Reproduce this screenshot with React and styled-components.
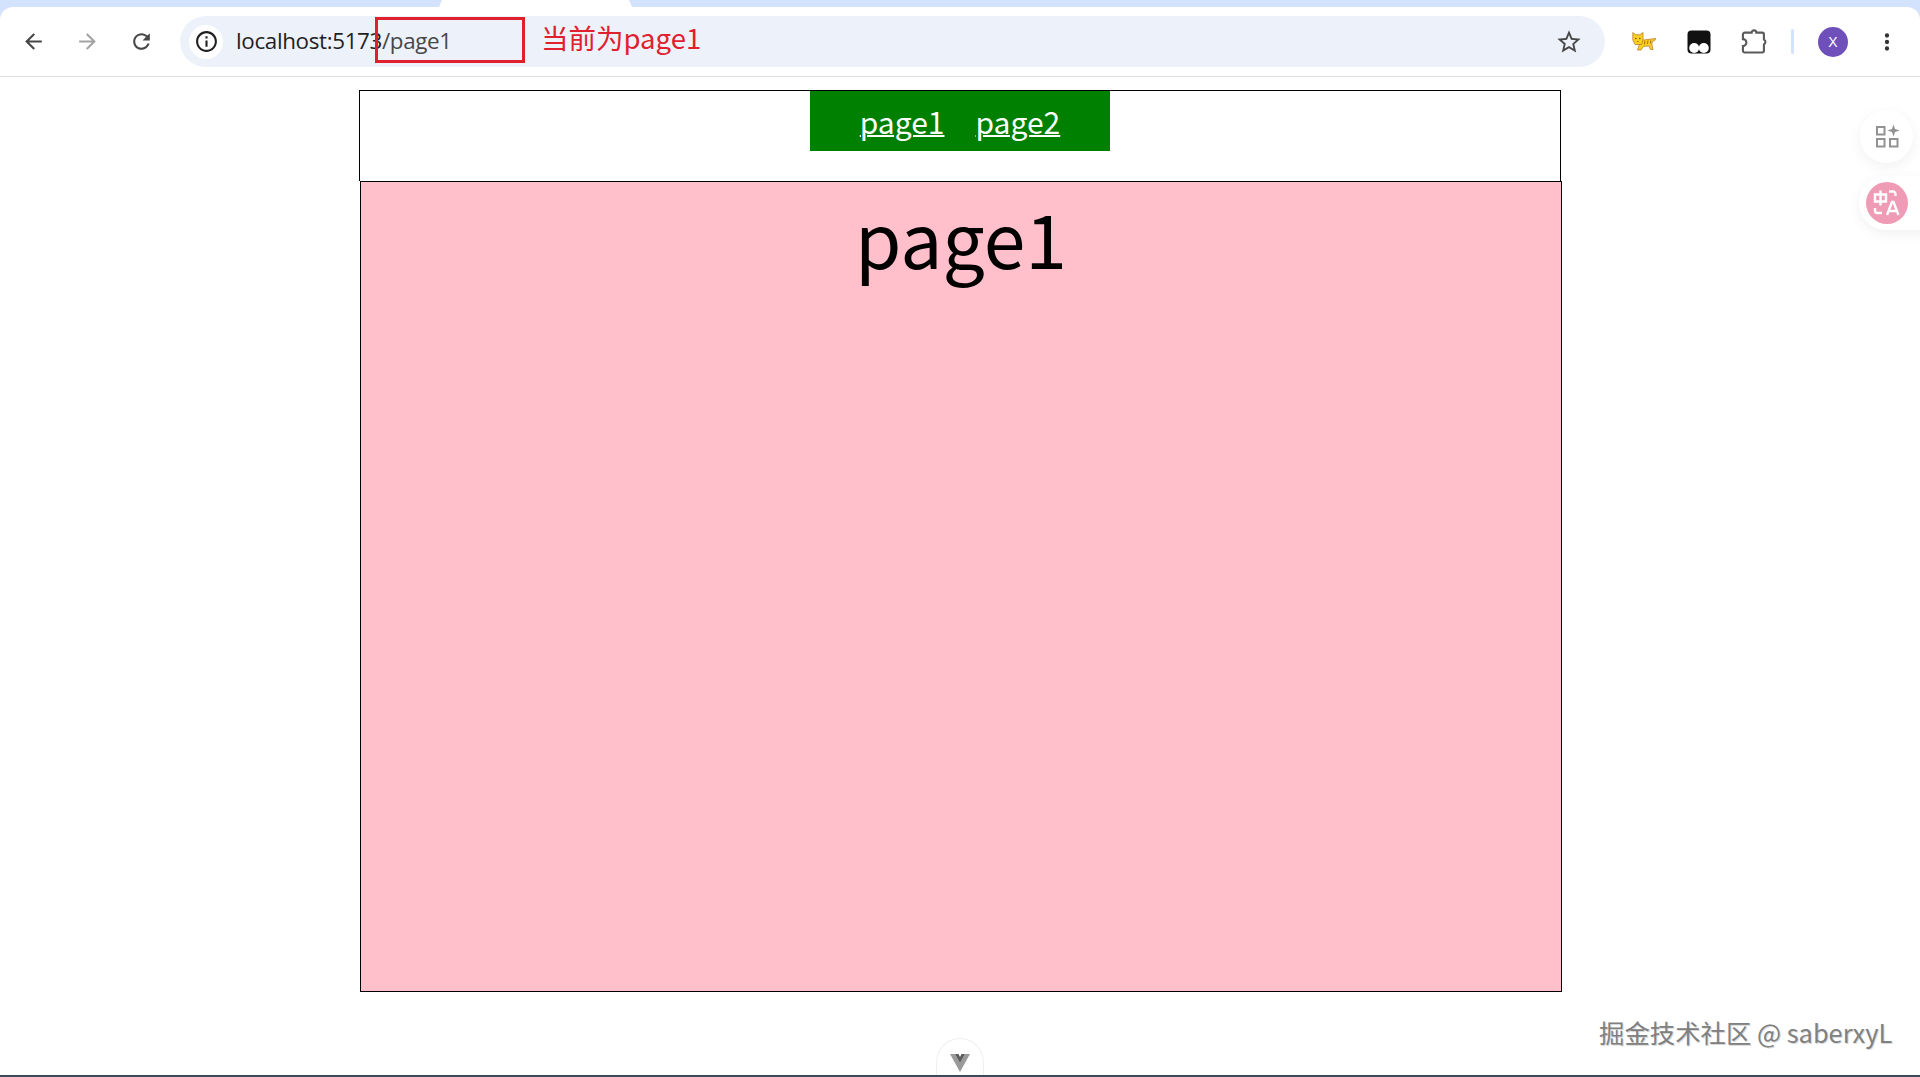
import React from "react";
import styled, { createGlobalStyle } from "styled-components";

const GlobalStyle = createGlobalStyle`
  html, body {
    margin: 0;
    padding: 0;
    background: #fff;
    overflow: hidden;
  }
`;

const cjk = `"Noto Sans CJK SC", "Noto Sans", sans-serif`;

const Page = styled.div`
  position: relative;
  display: flex;
  flex-direction: column;
  width: 1920px;
  height: 1077px;
  overflow: hidden;
  background: #fff;
`;

const Chrome = styled.div`
  background: #d3e3fd;
`;

const TabStrip = styled.div`
  height: 7px;
  padding-left: 439px;
`;

const ActiveTab = styled.div`
  width: 193px;
  height: 7px;
  background: #fff;
  clip-path: polygon(3px 0, calc(100% - 3px) 0, 100% 100%, 0 100%);
`;

const Toolbar = styled.div`
  display: flex;
  align-items: center;
  height: 69px;
  padding-left: 11px;
  background: #fff;
  border-radius: 13px 13px 0 0;
  border-bottom: 1px solid #e1e1e1;
`;

const NavButton = styled.div`
  display: flex;
  align-items: center;
  justify-content: center;
  width: 44px;
  margin-right: 10px;
  color: ${(p) => (p.$disabled ? "#a3a3a3" : "#474747")};
`;

const AddressBar = styled.div`
  position: relative;
  display: flex;
  align-items: center;
  width: 1425px;
  height: 51px;
  margin-left: 7px;
  margin-right: 11px;
  padding-left: 9px;
  box-sizing: border-box;
  background: #edf2fa;
  border-radius: 26px;
`;

const InfoBadge = styled.div`
  display: flex;
  align-items: center;
  justify-content: center;
  width: 34px;
  height: 34px;
  border-radius: 50%;
  background: #fff;
  color: #1f1f1f;
`;

const Url = styled.div`
  margin-left: 13px;
  margin-bottom: 2px;
  font-family: "Open Sans", sans-serif;
  font-size: 22.4px;
  letter-spacing: -0.35px;
  color: #1f1f1f;
`;

const UrlPath = styled.span`
  color: #474747;
`;

const StarButton = styled.div`
  display: flex;
  margin-left: auto;
  margin-right: 22px;
  color: #474747;
`;

const HighlightBox = styled.div`
  position: absolute;
  left: 195px;
  top: 1px;
  width: 150px;
  height: 46px;
  box-sizing: border-box;
  border: 3px solid #e0202f;
`;

const Annotation = styled.div`
  position: absolute;
  left: 361px;
  top: 1px;
  font-family: ${cjk};
  font-size: 27.5px;
  line-height: 40px;
  color: #e0202f;
`;

const ExtButton = styled.div`
  display: flex;
  align-items: center;
  justify-content: center;
  width: 55px;
  color: #5a5a5a;
`;

const Divider = styled.div`
  width: 3px;
  height: 25px;
  margin-left: 10px;
  background: #d3e3fd;
  border-radius: 2px;
`;

const Avatar = styled.div`
  display: flex;
  align-items: center;
  justify-content: center;
  width: 30px;
  height: 30px;
  margin-left: 24px;
  border-radius: 50%;
  background: #6f4fb9;
  color: #fff;
  font-family: "Liberation Sans", sans-serif;
  font-size: 14px;
`;

const MenuButton = styled.div`
  display: flex;
  margin-left: 26px;
  color: #333;
`;

const Main = styled.main`
  flex: 1;
  display: flex;
  flex-direction: column;
  align-items: center;
  padding-top: 13px;
`;

const Header = styled.header`
  display: flex;
  justify-content: center;
  width: 1202px;
  height: 91px;
  box-sizing: border-box;
  border: 1px solid #000;
  border-bottom: none;
`;

const Nav = styled.nav`
  display: flex;
  justify-content: center;
  align-items: center;
  gap: 31px;
  width: 300px;
  height: 60px;
  background: #008000;
`;

const NavLink = styled.a`
  font-family: ${cjk};
  font-size: 30px;
  color: #fff;
  text-decoration: underline;
  text-decoration-thickness: 2px;
`;

const Content = styled.section`
  width: 1202px;
  height: 811px;
  margin-left: 2px;
  box-sizing: border-box;
  border: 1px solid #000;
  background: #ffc0cb;
  text-align: center;
`;

const Title = styled.h1`
  margin: 0;
  padding-top: 5px;
  font-family: ${cjk};
  font-size: 75px;
  font-weight: 400;
  line-height: 100px;
  color: #000;
`;

const BottomBar = styled.div`
  height: 2px;
  background: #3a4a5c;
`;

const SideButton = styled.div`
  position: absolute;
  left: 1860px;
  top: ${(p) => p.$top}px;
  display: flex;
  align-items: center;
  justify-content: center;
  width: 53px;
  height: 53px;
  padding-bottom: 2px;
  box-sizing: border-box;
  border-radius: 50%;
  background: #fff;
  box-shadow: 0 4px 14px rgba(0, 0, 0, 0.06);
`;

const TranslatePill = styled.div`
  position: absolute;
  left: 1859px;
  top: 176px;
  display: flex;
  align-items: center;
  width: 70px;
  height: 54px;
  padding-left: 7px;
  box-sizing: border-box;
  border-radius: 27px 0 0 27px;
  background: #fff;
  box-shadow: 0 4px 14px rgba(0, 0, 0, 0.06);
`;

const TranslateIcon = styled.div`
  display: flex;
  align-items: center;
  justify-content: center;
  width: 42px;
  height: 42px;
  border-radius: 50%;
  background: #f09bb5;
`;

const DevtoolsTab = styled.div`
  position: absolute;
  left: 936px;
  bottom: 2px;
  display: flex;
  align-items: center;
  justify-content: center;
  width: 48px;
  height: 37px;
  padding-top: 12px;
  box-sizing: border-box;
  background: #fff;
  border: 1px solid #efefef;
  border-bottom: none;
  border-radius: 24px 24px 0 0;
`;

const Watermark = styled.div`
  position: absolute;
  left: 1599px;
  top: 1014px;
  font-family: ${cjk};
  font-size: 25.4px;
  line-height: 36px;
  white-space: nowrap;
  color: #808080;
  text-shadow: 1px 1px 0 #d9d9d9;
`;

const Icon = ({ size = 24, d, stroke }) => (
  <svg width={size} height={size} viewBox="0 0 24 24" fill={stroke ? "none" : "currentColor"} stroke={stroke ? "currentColor" : "none"} strokeWidth={stroke || 0}>
    <path d={d} />
  </svg>
);

const paths = {
  back: "M20 11H7.83l5.59-5.59L12 4l-8 8 8 8 1.41-1.41L7.83 13H20v-2z",
  forward: "M4 11h12.17l-5.59-5.59L12 4l8 8-8 8-1.41-1.41L16.17 13H4v-2z",
  reload:
    "M17.65 6.35C16.2 4.9 14.21 4 12 4c-4.42 0-7.99 3.58-7.99 8s3.57 8 7.99 8c3.73 0 6.84-2.55 7.73-6h-2.08c-.82 2.33-3.04 4-5.65 4-3.31 0-6-2.69-6-6s2.69-6 6-6c1.66 0 3.14.69 4.22 1.78L13 11h7V4l-2.35 2.35z",
  star:
    "M22 9.24l-7.19-.62L12 2 9.19 8.63 2 9.24l5.46 4.73L5.82 21 12 17.27 18.18 21l-1.63-7.03L22 9.24zM12 15.4l-3.76 2.27 1-4.28-3.32-2.88 4.38-.38L12 6.1l1.71 4.04 4.38.38-3.32 2.88 1 4.28L12 15.4z",
  info:
    "M11 7h2v2h-2zm0 4h2v6h-2zm1-9C6.48 2 2 6.48 2 12s4.48 10 10 10 10-4.48 10-10S17.52 2 12 2zm0 18c-4.41 0-8-3.59-8-8s3.59-8 8-8 8 3.59 8 8-3.59 8-8 8z",
  puzzle:
    "M4 4h6a2 2 0 0 1 4 0h5a1.500 1.500 0 0 1 1.500 1.500V10a2.200 2.200 0 0 1 0 4v5.500A1.500 1.500 0 0 1 19 21H4a1.500 1.500 0 0 1-1.500-1.500V15.500a3 3 0 0 0 0-6V5.500A1.500 1.500 0 0 1 4 4z",
  dots: "M12 8a2 2 0 1 0 0-4 2 2 0 0 0 0 4zm0 2a2 2 0 1 0 0 4 2 2 0 0 0 0-4zm0 6a2 2 0 1 0 0 4 2 2 0 0 0 0-4z",
};

const CatIcon = () => (
  <svg width="24" height="19" viewBox="0 0 24 19">
    <path fill="#f7d11e" stroke="#c07f2c" strokeWidth="0.8" d="M5 8h7l6-.8 5.500-.7.3 1-3.800 2.500v3l1 4.500h-2.500l-1.500-3.500-5.500.4L9 18H5.500L7 13.500z" />
    <path fill="#f7d11e" stroke="#c07f2c" strokeWidth="0.8" d="M.8.5l3 2.300h4L11 .5v7.500L9.500 12.500H3L.8 8z" />
    <path fill="none" stroke="#b5651d" strokeWidth="1" d="M13 9l-.6 3.500M16 8.500l-.6 3.500M18.800 8.500l-.4 3" />
    <circle cx="3.800" cy="6.500" r="0.800" fill="#7a4b12" />
    <circle cx="7.800" cy="6.500" r="0.800" fill="#7a4b12" />
    <path fill="none" stroke="#c0662c" strokeWidth="0.800" d="M4.800 9.500h2" />
  </svg>
);

const TamperIcon = () => (
  <svg width="24" height="24" viewBox="0 0 24 24">
    <rect x="0.500" y="0.500" width="23" height="23" rx="4" fill="#111" />
    <circle cx="7.200" cy="18" r="5" fill="#fff" />
    <circle cx="16.800" cy="18" r="5" fill="#fff" />
  </svg>
);

const SparkleGridIcon = () => (
  <svg width="24" height="24" viewBox="0 0 24 24" fill="none" stroke="#929292" strokeWidth="2">
    <rect x="2" y="3" width="7.500" height="7.500" />
    <rect x="2" y="15" width="7.500" height="7.500" />
    <rect x="15" y="15" width="7.500" height="7.500" />
    <path fill="#929292" stroke="none" d="M18.500 0.500l1.500 4.500 4.500 1.500-4.500 1.500-1.500 4.500-1.500-4.500-4.500-1.500 4.500-1.500z" />
  </svg>
);

const TranslateGlyph = () => (
  <svg width="30" height="30" viewBox="0 0 30 30" fill="none" stroke="#fff" strokeWidth="2.400">
    <path d="M3 6.500h11v7H3zM8.500 2.500v15" />
    <path d="M17 3.500h4a2.500 2.500 0 0 1 2.500 2.500v2" />
    <path d="M3 20v2.500A2.500 2.500 0 0 0 5.500 25H10" />
    <path d="M15 27l5-13h1.500l5 13M17 23h8" />
  </svg>
);

const VueMark = () => (
  <svg width="20" height="18" viewBox="0 0 20 18">
    <path fill="#9a9a9a" d="M0 0h5l5 9 5-9h5L10 18z" />
    <path fill="#5c5c5c" d="M5 0h3.500L10 3l1.500-3H15l-5 9z" />
  </svg>
);

function App() {
  return (
    <Page>
      <GlobalStyle />
      <Chrome>
        <TabStrip>
          <ActiveTab />
        </TabStrip>
        <Toolbar>
          <NavButton>
            <Icon size={25} d={paths.back} />
          </NavButton>
          <NavButton $disabled>
            <Icon size={25} d={paths.forward} />
          </NavButton>
          <NavButton>
            <Icon size={25} d={paths.reload} />
          </NavButton>
          <AddressBar>
            <InfoBadge>
              <Icon size={25} d={paths.info} />
            </InfoBadge>
            <Url>
              localhost:5173<UrlPath>/page1</UrlPath>
            </Url>
            <StarButton>
              <Icon size={28} d={paths.star} />
            </StarButton>
            <HighlightBox />
            <Annotation>当前为page1</Annotation>
          </AddressBar>
          <ExtButton>
            <CatIcon />
          </ExtButton>
          <ExtButton>
            <TamperIcon />
          </ExtButton>
          <ExtButton>
            <Icon size={28} d={paths.puzzle} stroke={1.8} />
          </ExtButton>
          <Divider />
          <Avatar>X</Avatar>
          <MenuButton>
            <Icon size={26} d={paths.dots} />
          </MenuButton>
        </Toolbar>
      </Chrome>
      <Main>
        <Header>
          <Nav>
            <NavLink href="#page1">page1</NavLink>
            <NavLink href="#page2">page2</NavLink>
          </Nav>
        </Header>
        <Content>
          <Title>page1</Title>
        </Content>
      </Main>
      <BottomBar />
      <SideButton $top={110}>
        <SparkleGridIcon />
      </SideButton>
      <TranslatePill>
        <TranslateIcon>
          <TranslateGlyph />
        </TranslateIcon>
      </TranslatePill>
      <DevtoolsTab>
        <VueMark />
      </DevtoolsTab>
      <Watermark>掘金技术社区 @ saberxyL</Watermark>
    </Page>
  );
}

export default App;
